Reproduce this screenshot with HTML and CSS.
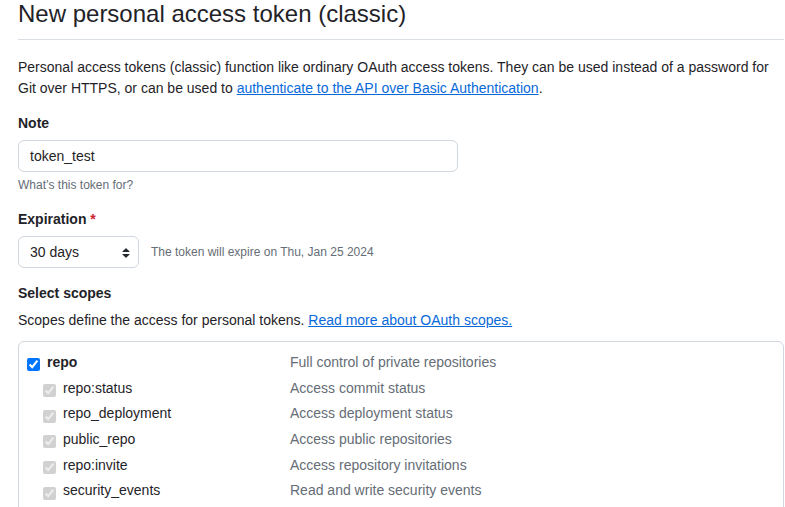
FILE: index.html
```html
<!DOCTYPE html>
<html lang="en">
<head>
<meta charset="utf-8">
<title>New personal access token (classic)</title>
<link rel="stylesheet" href="styles.css">
</head>
<body>
<div class="page">
  <h2 class="title">New personal access token (classic)</h2>
  <p class="intro">Personal access tokens (classic) function like ordinary OAuth access tokens. They can be used instead of a password for Git over HTTPS, or can be used to <a href="#" class="link">authenticate to the API over Basic Authentication</a>.</p>

  <div class="group group-note">
    <label class="label" for="note">Note</label>
    <input class="input" id="note" type="text" value="token_test">
    <p class="hint">What’s this token for?</p>
  </div>

  <div class="group group-exp">
    <div class="label">Expiration <span class="req">*</span></div>
    <div class="exp-row">
      <div class="select">
        <span>30 days</span>
        <svg class="select-arrow" width="16" height="16" viewBox="0 0 16 16"><path fill="#24292f" d="M4.427 9.427l3.396 3.396a.25.25 0 00.354 0l3.396-3.396A.25.25 0 0011.396 9H4.604a.25.25 0 00-.177.427zM4.427 6.573l3.396-3.396a.25.25 0 01.354 0l3.396 3.396A.25.25 0 0111.396 7H4.604a.25.25 0 01-.177-.427z"/></svg>
      </div>
      <span class="exp-note">The token will expire on Thu, Jan 25 2024</span>
    </div>
  </div>

  <div class="group group-scopes">
    <div class="label">Select scopes</div>
    <p class="scopes-desc">Scopes define the access for personal tokens. <a href="#" class="link">Read more about OAuth scopes.</a></p>
  </div>

  <div class="scopes">
    <div class="scope-row">
      <label class="scope-name parent"><input type="checkbox" class="cb" checked><span>repo</span></label>
      <span class="scope-info">Full control of private repositories</span>
    </div>
    <div class="scope-row">
      <label class="scope-name child"><input type="checkbox" class="cb" checked disabled><span>repo:status</span></label>
      <span class="scope-info">Access commit status</span>
    </div>
    <div class="scope-row">
      <label class="scope-name child"><input type="checkbox" class="cb" checked disabled><span>repo_deployment</span></label>
      <span class="scope-info">Access deployment status</span>
    </div>
    <div class="scope-row">
      <label class="scope-name child"><input type="checkbox" class="cb" checked disabled><span>public_repo</span></label>
      <span class="scope-info">Access public repositories</span>
    </div>
    <div class="scope-row">
      <label class="scope-name child"><input type="checkbox" class="cb" checked disabled><span>repo:invite</span></label>
      <span class="scope-info">Access repository invitations</span>
    </div>
    <div class="scope-row">
      <label class="scope-name child"><input type="checkbox" class="cb" checked disabled><span>security_events</span></label>
      <span class="scope-info">Read and write security events</span>
    </div>
  </div>
</div>
</body>
</html>
```

FILE: styles.css
```css
html, body {
  margin: 0;
  padding: 0;
  background: #ffffff;
}

body {
  font-family: "Liberation Sans", Arial, sans-serif;
  font-size: 14px;
  line-height: 21px;
  color: #1f2328;
  overflow: hidden;
}

.page {
  margin-left: 18px;
  width: 766px;
}

.title {
  margin: 0;
  font-size: 24px;
  font-weight: 400;
  line-height: 28px;
  padding-bottom: 11px;
  border-bottom: 1px solid #d8dee4;
}

.intro {
  margin: 17px 0 0;
}

.link {
  color: #0969da;
  text-decoration: underline;
}

.group {
  display: flex;
  flex-direction: column;
  align-items: flex-start;
}

.group-note {
  margin-top: 14px;
}

.group-exp {
  margin-top: 15px;
}

.group-scopes {
  margin-top: 15px;
}

.label {
  font-weight: 700;
  display: block;
}

.req {
  color: #cf222e;
}

.input {
  box-sizing: border-box;
  margin-top: 6px;
  width: 440px;
  height: 32px;
  padding: 0 11px;
  border: 1px solid #d0d7de;
  border-radius: 6px;
  font-family: inherit;
  font-size: 14px;
  color: #1f2328;
  background: #ffffff;
  outline: none;
}

.hint {
  margin: 4px 0 0;
  font-size: 12px;
  line-height: 18px;
  color: #656d76;
}

.exp-row {
  margin-top: 6px;
  display: flex;
  align-items: center;
  gap: 12px;
}

.select {
  box-sizing: border-box;
  width: 121px;
  height: 32px;
  padding: 0 4px 0 11px;
  border: 1px solid #d0d7de;
  border-radius: 6px;
  display: flex;
  align-items: center;
  justify-content: space-between;
  font-size: 14px;
}

.select-arrow {
  display: block;
  margin-top: 1px;
}

.exp-note {
  font-size: 12px;
  color: #656d76;
}

.scopes-desc {
  margin: 6px 0 0;
}

.scopes {
  margin-top: 10px;
  border: 1px solid #d0d7de;
  border-radius: 6px;
  padding: 8px 0 20px 8px;
}

.scope-row {
  display: flex;
  align-items: center;
  line-height: 25.7px;
  height: 25.7px;
}

.scope-name {
  width: 263px;
  display: flex;
  align-items: center;
  flex-shrink: 0;
}

.scope-name.parent {
  font-weight: 700;
}

.scope-name.child {
  padding-left: 16px;
  box-sizing: border-box;
}

.cb {
  width: 13px;
  height: 13px;
  margin: 4px 7px 0 0;
  flex-shrink: 0;
}

.scope-info {
  color: #656d76;
}
```
